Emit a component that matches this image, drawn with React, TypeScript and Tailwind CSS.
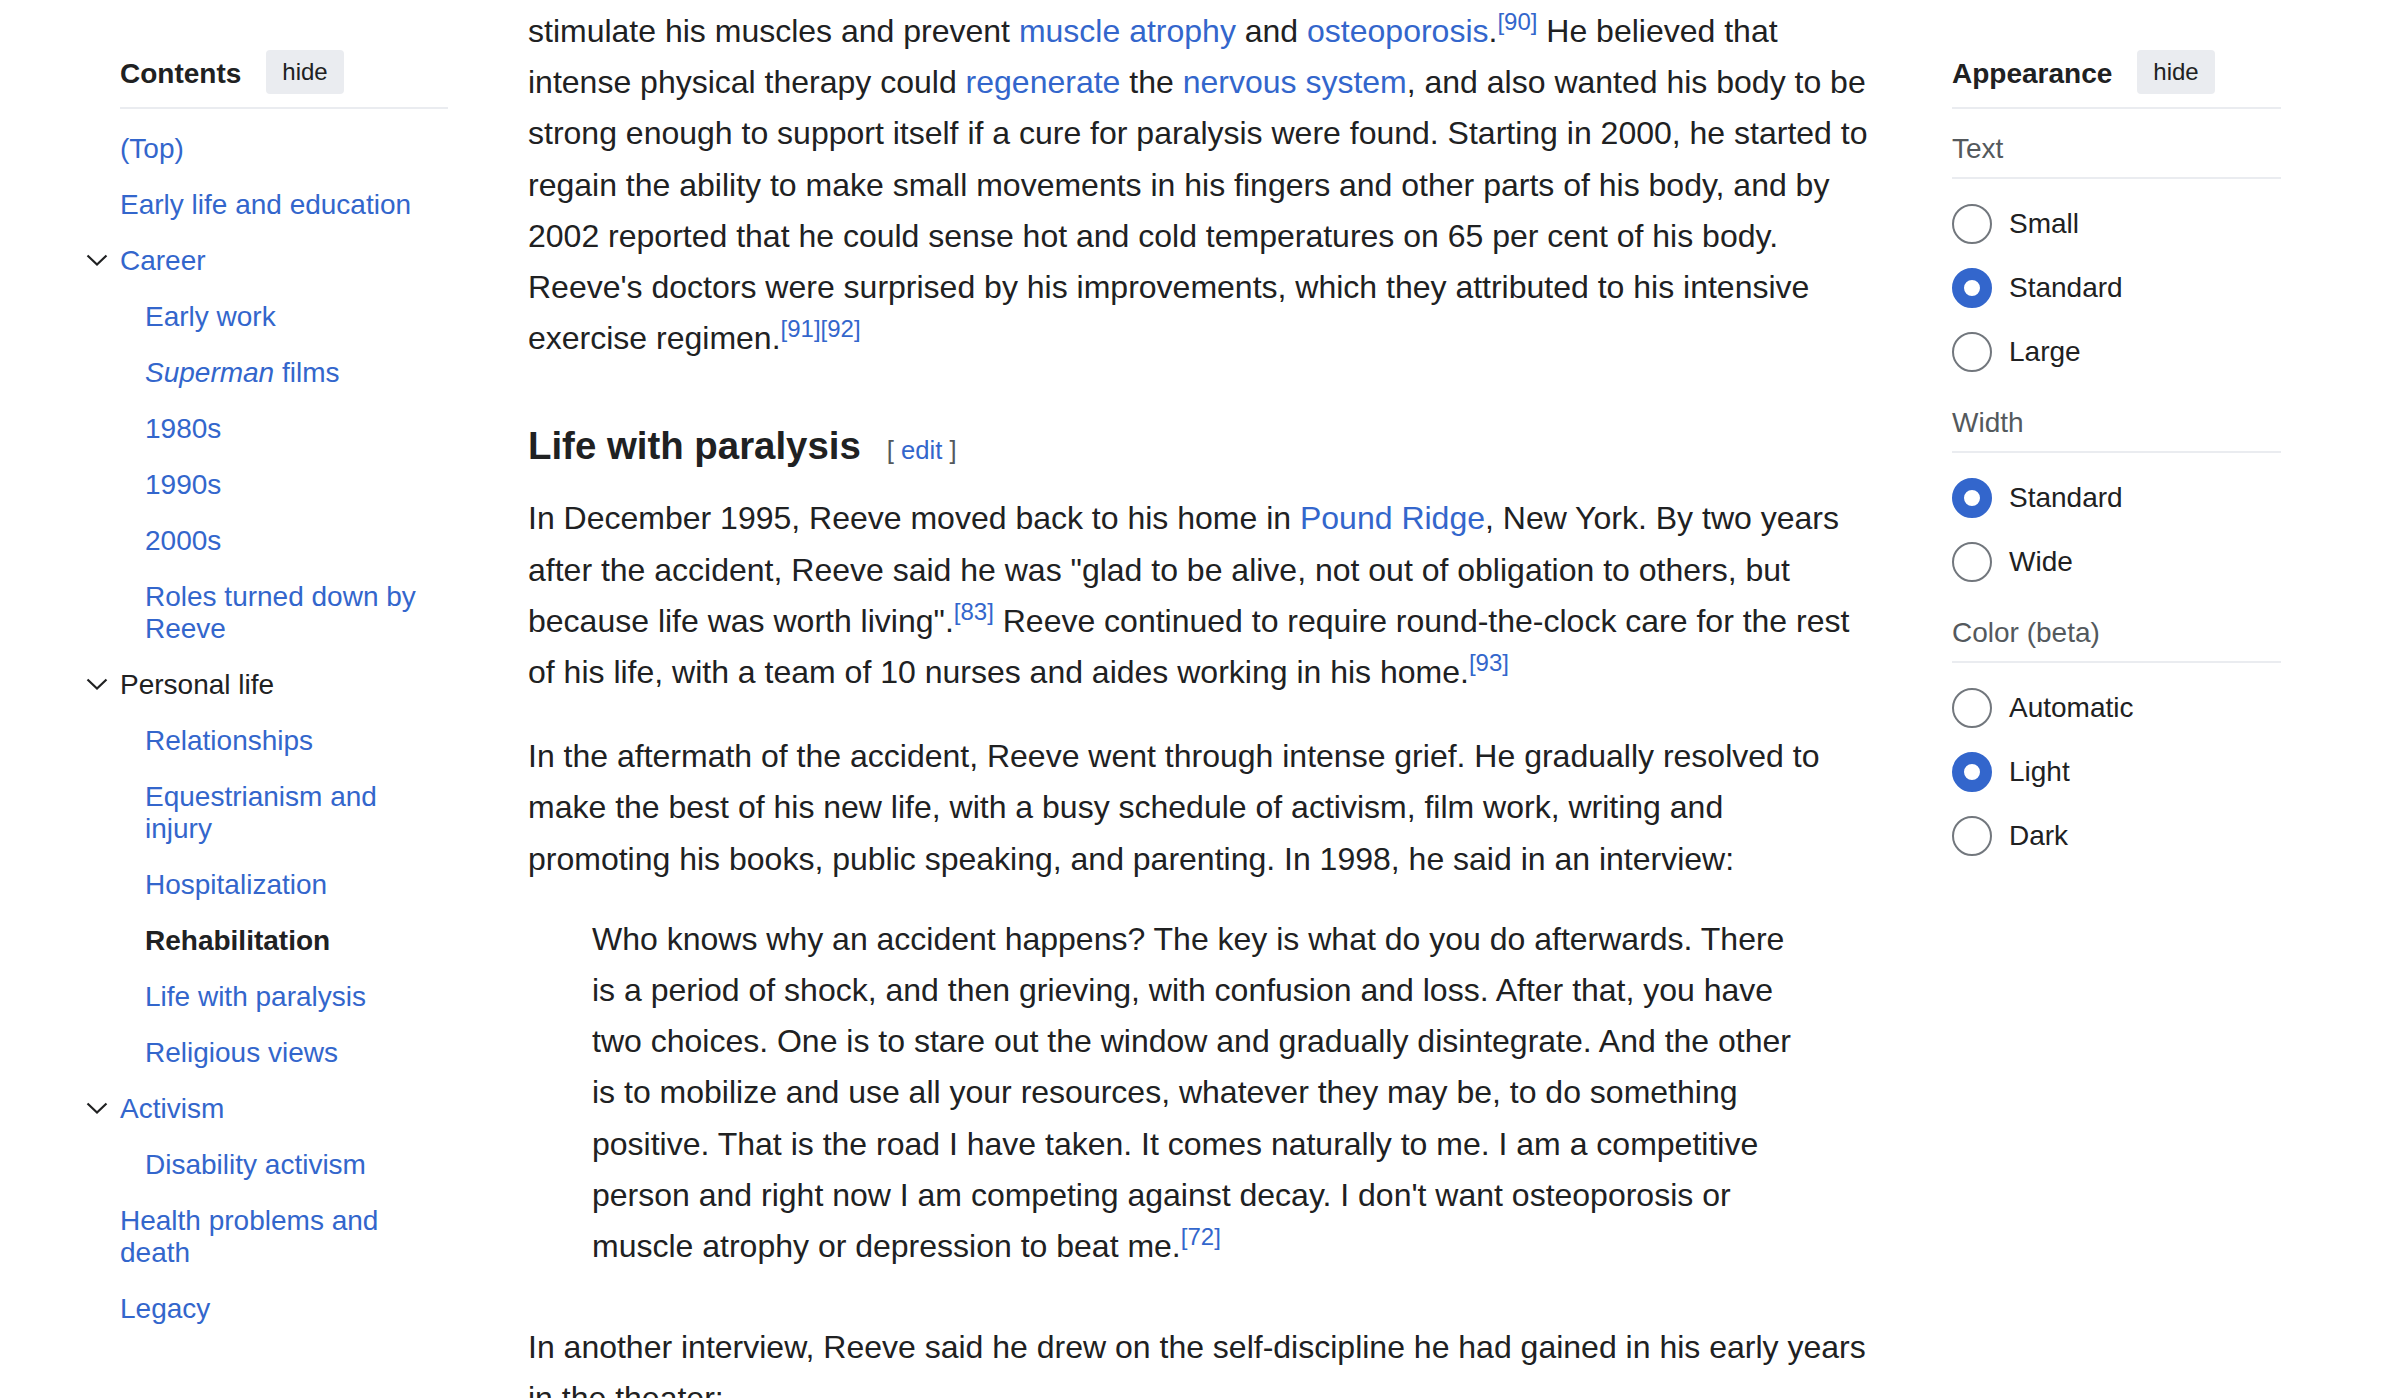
import type { ReactNode } from "react";

type TocItem = {
  label: ReactNode;
  level: 1 | 2;
  chevron?: boolean;
  state?: "link" | "dark" | "active";
};

const toc: TocItem[] = [
  { label: "(Top)", level: 1 },
  { label: "Early life and education", level: 1 },
  { label: "Career", level: 1, chevron: true },
  { label: "Early work", level: 2 },
  { label: <><i>Superman</i> films</>, level: 2 },
  { label: "1980s", level: 2 },
  { label: "1990s", level: 2 },
  { label: "2000s", level: 2 },
  { label: "Roles turned down by Reeve", level: 2 },
  { label: "Personal life", level: 1, chevron: true, state: "dark" },
  { label: "Relationships", level: 2 },
  { label: "Equestrianism and injury", level: 2 },
  { label: "Hospitalization", level: 2 },
  { label: "Rehabilitation", level: 2, state: "active" },
  { label: "Life with paralysis", level: 2 },
  { label: "Religious views", level: 2 },
  { label: "Activism", level: 1, chevron: true },
  { label: "Disability activism", level: 2 },
  { label: "Health problems and death", level: 1 },
  { label: "Legacy", level: 1 },
];

const appearance = [
  { title: "Text", options: ["Small", "Standard", "Large"], checked: "Standard" },
  { title: "Width", options: ["Standard", "Wide"], checked: "Standard" },
  { title: "Color (beta)", options: ["Automatic", "Light", "Dark"], checked: "Light" },
];

function Chevron() {
  return (
    <svg width="22" height="12" viewBox="0 0 22 12" fill="none">
      <path d="M1.5 1.5 L11 10.5 L20.5 1.5" stroke="#202122" strokeWidth="2.2" />
    </svg>
  );
}

function A({ children }: { children: ReactNode }) {
  return <a className="text-[#3366cc]">{children}</a>;
}

function Ref({ n }: { n: string }) {
  return <sup className="text-[#3366cc]">[{n}]</sup>;
}

function PanelHeader({ title }: { title: string }) {
  return (
    <div className="pb-[13px] border-b-2 border-[#eaecf0]">
      <div className="flex items-center gap-[25px] h-[44px]">
        <span className="text-[28px] leading-[32px] pt-[3px] font-bold text-[#202122]">{title}</span>
        <button className="h-[44px] px-[16px] rounded-[4px] bg-[#eaecf0] text-[24px] text-[#202122]">
          hide
        </button>
      </div>
    </div>
  );
}

function Radio({ checked }: { checked: boolean }) {
  return checked ? (
    <span className="w-[40px] h-[40px] rounded-full border-[12px] border-[#3366cc] bg-white shrink-0" />
  ) : (
    <span className="w-[40px] h-[40px] rounded-full border-2 border-[#72777d] bg-white shrink-0" />
  );
}

export default function App() {
  return (
    <div className="h-[1398px] overflow-hidden bg-white flex pl-[120px] pr-[119px] gap-[80px] font-['Liberation_Sans',Arial,sans-serif] text-[#202122]">
      {/* Contents */}
      <aside className="w-[328px] shrink-0 pt-[50px]">
        <PanelHeader title="Contents" />
        <ul className="pt-[12px] pr-[13px]">
          {toc.map((item, i) => (
            <li
              key={i}
              className={`py-[12px] text-[28px] leading-[32px] ${item.level === 2 ? "pl-[25px]" : ""}`}
            >
              <div className={`flex ${item.chevron ? "-ml-[34px]" : ""}`}>
                {item.chevron && (
                  <span className="w-[34px] h-[32px] flex items-center pb-[3px] shrink-0">
                    <Chevron />
                  </span>
                )}
                <a
                  className={
                    item.state === "active"
                      ? "font-bold text-[#202122]"
                      : item.state === "dark"
                      ? "text-[#202122]"
                      : "text-[#3366cc]"
                  }
                >
                  {item.label}
                </a>
              </div>
            </li>
          ))}
        </ul>
      </aside>

      {/* Article */}
      <main className="flex-1 min-w-0 pt-[6px] text-[32px] leading-[51.2px] whitespace-nowrap">
        <p>
          stimulate his muscles and prevent <A>muscle atrophy</A> and <A>osteoporosis</A>.<Ref n="90" /> He believed that
          <br />
          intense physical therapy could <A>regenerate</A> the <A>nervous system</A>, and also wanted his body to be
          <br />
          strong enough to support itself if a cure for paralysis were found. Starting in 2000, he started to
          <br />
          regain the ability to make small movements in his fingers and other parts of his body, and by
          <br />
          2002 reported that he could sense hot and cold temperatures on 65 per cent of his body.
          <br />
          Reeve's doctors were surprised by his improvements, which they attributed to his intensive
          <br />
          exercise regimen.<Ref n="91" /><Ref n="92" />
        </p>

        <h3 className="mt-[51px] text-[38.4px] leading-[61px] font-bold text-[#202122]">
          Life with paralysis
          <span className="ml-[26px] text-[25.6px] leading-none font-normal text-[#54595d]">
            [ <A>edit</A> ]
          </span>
        </h3>

        <p className="mt-[17px]">
          In December 1995, Reeve moved back to his home in <A>Pound Ridge</A>, New York. By two years
          <br />
          after the accident, Reeve said he was "glad to be alive, not out of obligation to others, but
          <br />
          because life was worth living".<Ref n="83" /> Reeve continued to require round-the-clock care for the rest
          <br />
          of his life, with a team of 10 nurses and aides working in his home.<Ref n="93" />
        </p>

        <p className="mt-[33px]">
          In the aftermath of the accident, Reeve went through intense grief. He gradually resolved to
          <br />
          make the best of his new life, with a busy schedule of activism, film work, writing and
          <br />
          promoting his books, public speaking, and parenting. In 1998, he said in an interview:
        </p>

        <blockquote className="mt-[29px] pl-[64px]">
          Who knows why an accident happens? The key is what do you do afterwards. There
          <br />
          is a period of shock, and then grieving, with confusion and loss. After that, you have
          <br />
          two choices. One is to stare out the window and gradually disintegrate. And the other
          <br />
          is to mobilize and use all your resources, whatever they may be, to do something
          <br />
          positive. That is the road I have taken. It comes naturally to me. I am a competitive
          <br />
          person and right now I am competing against decay. I don't want osteoporosis or
          <br />
          muscle atrophy or depression to beat me.<Ref n="72" />
        </blockquote>

        <p className="mt-[50px]">
          In another interview, Reeve said he drew on the self-discipline he had gained in his early years
          <br />
          in the theater:
        </p>
      </main>

      {/* Appearance */}
      <aside className="w-[329px] shrink-0 pt-[50px]">
        <PanelHeader title="Appearance" />
        {appearance.map((group, gi) => (
          <div key={group.title}>
            <div
              className={`${gi === 0 ? "pt-[24px]" : "pt-[23px]"} pb-[12px] text-[28px] leading-[32px] text-[#54595d] border-b-2 border-[#eaecf0]`}
            >
              {group.title}
            </div>
            <div className="pt-[13px]">
              {group.options.map((opt) => (
                <label key={opt} className="flex items-center gap-[17px] h-[64px] text-[28px] text-[#202122]">
                  <Radio checked={opt === group.checked} />
                  {opt}
                </label>
              ))}
            </div>
          </div>
        ))}
      </aside>
    </div>
  );
}
